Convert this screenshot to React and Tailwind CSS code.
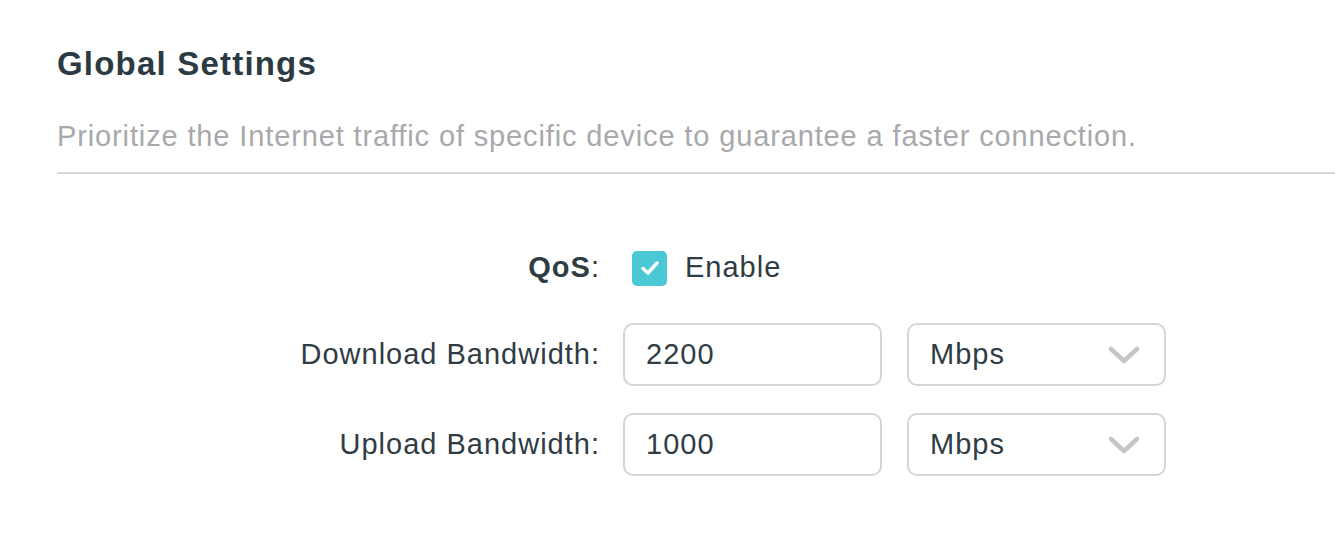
import React, { useState } from 'react';

const FONT = { fontFamily: '"Liberation Sans", Arial, sans-serif' };

function Chevron() {
  return (
    <svg width="32" height="18" viewBox="0 0 32 18" fill="none" className="shrink-0">
      <path d="M3 3 L16 15 L29 3" stroke="#c6c6c6" strokeWidth="4.5" strokeLinecap="round" strokeLinejoin="round" />
    </svg>
  );
}

function UnitSelect({ value }) {
  return (
    <div className="w-[259px] h-[63px] border-2 border-[#d5d5d5] rounded-[10px] flex items-center justify-between pl-[21px] pr-[24px] text-[29px] tracking-[1px] text-[#2f3c44]">
      <span>{value}</span>
      <Chevron />
    </div>
  );
}

function Row({ label, value, unit }) {
  return (
    <div className="flex items-center h-[63px]">
      <div className="w-[600px] text-right text-[29px] tracking-[1px] text-[#2f3c44]">{label}</div>
      <div className="ml-[23px] w-[259px] h-[63px] border-2 border-[#d5d5d5] rounded-[10px] flex items-center pl-[21px] text-[29px] tracking-[1px] text-[#2f3c44]">
        {value}
      </div>
      <div className="ml-[25px]">
        <UnitSelect value={unit} />
      </div>
    </div>
  );
}

export default function App() {
  const [qos, setQos] = useState(true);
  return (
    <div className="w-[1335px] h-[542px] bg-white overflow-hidden" style={FONT}>
      <div className="pl-[57px] pt-[44px]">
        <h2 className="text-[33px] font-bold tracking-[1.2px] text-[#2c3a44] leading-[40px]">Global Settings</h2>
        <p className="mt-[35px] text-[29px] tracking-[0.87px] text-[#a7a9ac] leading-[34px]">
          Prioritize the Internet traffic of specific device to guarantee a faster connection.
        </p>
        <div className="mt-[19px] h-[2px] bg-[#d8d8d8]" />
      </div>

      <div className="mt-[76px] flex flex-col">
        <div className="flex items-center h-[36px]">
          <div className="w-[600px] text-right text-[29px] tracking-[1px] text-[#2f3c44]">
            <span className="font-bold">QoS</span>:
          </div>
          <button
            onClick={() => setQos(!qos)}
            className={`ml-[32px] w-[35px] h-[35px] rounded-[5px] flex items-center justify-center ${qos ? 'bg-[#4ac8d6]' : 'bg-white border-2 border-[#d5d5d5]'}`}
          >
            {qos && (
              <svg width="20" height="16" viewBox="0 0 20 16" fill="none">
                <path d="M3 8.5 L8 13 L17 3" stroke="white" strokeWidth="3.5" strokeLinecap="round" strokeLinejoin="round" />
              </svg>
            )}
          </button>
          <span className="ml-[18px] text-[29px] tracking-[1px] text-[#2f3c44]">Enable</span>
        </div>

        <div className="mt-[37px] flex flex-col gap-[27px]">
          <Row label="Download Bandwidth:" value="2200" unit="Mbps" />
          <Row label="Upload Bandwidth:" value="1000" unit="Mbps" />
        </div>
      </div>
    </div>
  );
}
